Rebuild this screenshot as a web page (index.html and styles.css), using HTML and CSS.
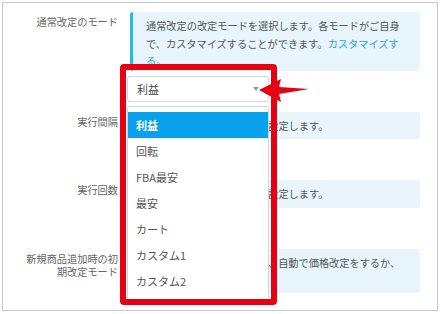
FILE: index.html
```html
<!DOCTYPE html>
<html lang="ja">
<head>
    <meta charset="UTF-8">
    <meta name="viewport" content="width=device-width, initial-scale=1.0">
    <title>通常改定のモード</title>

    <link rel="stylesheet" href="styles.css">
</head>
<body>

    <div class="frame">
        <div class="row">
            <div class="label">通常改定のモード</div>
            <div class="note">
                通常改定の改定モードを選択します。各モードがご自身で、カスタマイズすることができます。<a href="#" class="link">カスタマイズする。</a>
            </div>
        </div>

        <div class="row">
            <div class="label">実行間隔</div>
            <div class="note">価格改定を実行する間隔を設定します。</div>
        </div>

        <div class="row">
            <div class="label">実行回数</div>
            <div class="note">価格改定を実行する回数を設定します。</div>
        </div>

        <div class="row">
            <div class="label">新規商品追加時の初期改定モード</div>
            <div class="note">新規で商品を追加した時に、自動で価格改定をするか、しないかを選択します。</div>
        </div>

        <!-- 注目の枠: セレクトと開いたリスト -->
        <div class="callout">
            <div class="select">
                利益
                <span class="caret"></span>
            </div>
            <ul class="options">
                <li class="active">利益</li>
                <li>回転</li>
                <li>FBA最安</li>
                <li>最安</li>
                <li>カート</li>
                <li>カスタム1</li>
                <li>カスタム2</li>
            </ul>
        </div>

        <svg class="arrow" width="54" height="28" viewBox="0 0 54 28">
            <polygon points="0,12 22,1 20,9 50,11 20,16 22,24" fill="#e60012"/>
        </svg>
    </div>

</body>
</html>
```

FILE: styles.css
```css
body {
    margin: 0;
    background-color: #fff;
    font-family: "Noto Sans CJK JP", "Noto Sans", sans-serif;
    color: #555;
}

.frame {
    position: relative;
    box-sizing: border-box;
    width: 436px;
    height: 309px;
    margin: 2px 0 0 2px;
    border: 1px solid #c8c8c8;
    padding: 9px 17px 0 19px;
    display: flex;
    flex-direction: column;
    gap: 41px;
    overflow: hidden;
}

.row {
    display: grid;
    grid-template-columns: 96px 1fr;
    column-gap: 12px;
}

.label {
    font-size: 10.2px;
    line-height: 13px;
    padding-top: 3px;
    text-align: right;
    color: #666;
}

.note {
    background-color: #e9f5fc;
    border-left: 3px solid #e9f5fc;
    border-radius: 3px;
    padding: 5px 14px 5px 13px;
    font-size: 10.2px;
    line-height: 17.5px;
    color: #555;
}

.row:first-child .note {
    border-left-color: #29b6f6;
    padding-bottom: 1px;
}

.row:nth-child(4) .note {
    line-height: 17px;
}

.link {
    color: #1fa3e6;
    text-decoration: none;
}

.callout {
    position: absolute;
    left: 117px;
    top: 61px;
    width: 157px;
    height: 241px;
    box-sizing: border-box;
    border: 6px solid #e60012;
    border-radius: 4px;
    overflow: hidden;
    padding: 6px 0 0 1px;
}

.select {
    position: relative;
    box-sizing: border-box;
    width: 142px;
    height: 26px;
    border: 1px solid #cfd6de;
    border-radius: 3px;
    background-color: #fff;
    font-size: 11px;
    line-height: 24px;
    padding-left: 9px;
    color: #444;
}

.caret {
    position: absolute;
    right: 9px;
    top: 10px;
    border-left: 3px solid transparent;
    border-right: 3px solid transparent;
    border-top: 4px solid #999;
}

.options {
    list-style: none;
    margin: 4px 0 0 0;
    padding: 5px 0 0 0;
    box-sizing: border-box;
    width: 142px;
    height: 200px;
    border: 1px solid #cfd6de;
    border-radius: 2px;
    background-color: #fff;
}

.options li {
    height: 26px;
    line-height: 26px;
    padding-left: 8px;
    font-size: 11px;
    color: #555;
}

.options li.active {
    background-color: #08a2ec;
    color: #fff;
    font-weight: bold;
}

.arrow {
    position: absolute;
    left: 256px;
    top: 75px;
}
```
